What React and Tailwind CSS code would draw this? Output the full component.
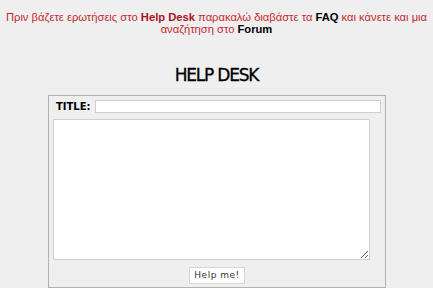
export default function App() {
  return (
    <div className="w-[433px] h-[288px] overflow-hidden bg-[#efefef] font-['DejaVu_Sans',sans-serif]">
      {/* Notice */}
      <p className="pt-[11px] text-center text-[11.2px] leading-[12px] text-[#c42a30] whitespace-nowrap font-['Liberation_Sans',Arial,sans-serif]">
        Πριν βάζετε ερωτήσεις στο <b className="text-[#a8141c]">Help Desk</b> παρακαλώ διαβάστε τα{' '}
        <b className="text-black">FAQ</b> και κάνετε και μια
        <br />
        αναζήτηση στο <b className="text-black">Forum</b>
      </p>

      <h1 className="mt-[29px] text-center text-[17px] leading-[22px] tracking-[-1.2px] text-black [-webkit-text-stroke:0.3px_black]">
        HELP DESK
      </h1>

      {/* Form box */}
      <div className="ml-[48px] mt-[9px] w-[338px] border border-[#aeb2b6] bg-[#efefef] pt-[4px] pb-[3px]">
        <div className="flex items-center pl-[7px] pr-[4px]">
          <span className="w-[39px] text-[10px] font-bold leading-[13px] text-black">TITLE:</span>
          <input
            type="text"
            className="h-[13px] flex-1 border border-[#cfcfcf] bg-white outline-none"
          />
        </div>
        <textarea className="mt-[6px] ml-[4px] block h-[141px] w-[317px] border border-[#cfcfcf] bg-white outline-none" />
        <div className="mt-[7px] flex justify-center">
          <button className="h-[17px] w-[56px] border border-[#d6d6d6] bg-white text-[9px] leading-[15px] tracking-[0.5px] text-[#333]">
            Help me!
          </button>
        </div>
      </div>
    </div>
  );
}
